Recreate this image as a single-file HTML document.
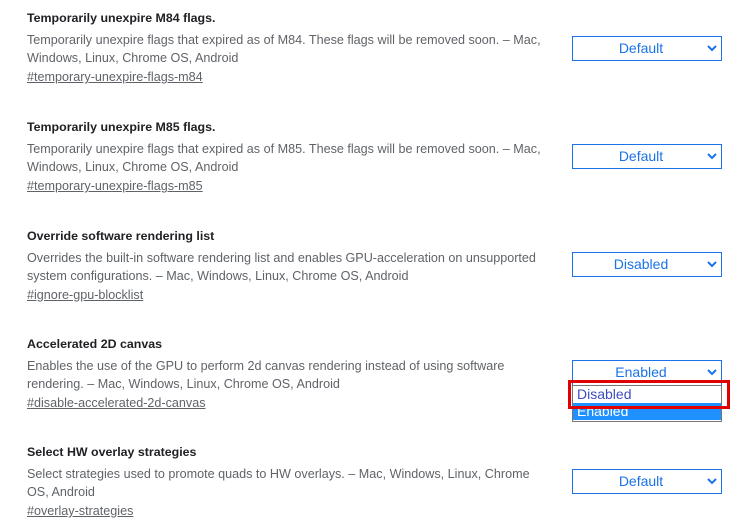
<html><head><style>
body{margin:0;width:755px;height:531px;background:#fff;font-family:"Liberation Sans",Arial,sans-serif;position:relative;overflow:hidden}
.s{position:absolute;left:27px;width:535px}
.t{font-size:12.4px;font-weight:bold;color:#202124;height:18px;line-height:18px;position:absolute;top:-9px;white-space:nowrap}
.d{font-size:12.6px;color:#5f6368;line-height:18px;position:absolute;top:13px;width:535px}
.l{font-size:12.6px;color:#5f6368;text-decoration:underline;position:absolute;line-height:18px;top:50px;white-space:nowrap}
.sel{position:absolute;left:572px;width:148px;height:23px;border:1px solid #1a73e8;color:#1a73e8;font-size:14px;line-height:23px;text-align:center;padding-right:0;box-sizing:content-box}
.sel span{position:relative;left:-6px}
.sel svg{position:absolute;right:4px;top:8px}
</style></head><body>
<div class="s" style="top:18px"><div class="t">Temporarily unexpire M84 flags.</div><div class="d">Temporarily unexpire flags that expired as of M84. These flags will be removed soon. – Mac, Windows, Linux, Chrome OS, Android</div><div class="l">#temporary-unexpire-flags-m84</div></div>
<div class="s" style="top:127px"><div class="t">Temporarily unexpire M85 flags.</div><div class="d">Temporarily unexpire flags that expired as of M85. These flags will be removed soon. – Mac, Windows, Linux, Chrome OS, Android</div><div class="l">#temporary-unexpire-flags-m85</div></div>
<div class="s" style="top:236px"><div class="t">Override software rendering list</div><div class="d">Overrides the built-in software rendering list and enables GPU-acceleration on unsupported system configurations. – Mac, Windows, Linux, Chrome OS, Android</div><div class="l">#ignore-gpu-blocklist</div></div>
<div class="s" style="top:344px"><div class="t">Accelerated 2D canvas</div><div class="d">Enables the use of the GPU to perform 2d canvas rendering instead of using software rendering. – Mac, Windows, Linux, Chrome OS, Android</div><div class="l">#disable-accelerated-2d-canvas</div></div>
<div class="s" style="top:452px"><div class="t">Select HW overlay strategies</div><div class="d" style="width:522px">Select strategies used to promote quads to HW overlays. – Mac, Windows, Linux, Chrome OS, Android</div><div class="l">#overlay-strategies</div></div>

<div class="sel" style="top:36px"><span>Default</span><svg width="10" height="7" viewBox="0 0 10 7"><path d="M1 1l4 4 4-4" stroke="#1a73e8" stroke-width="2" fill="none"/></svg></div>
<div class="sel" style="top:144px"><span>Default</span><svg width="10" height="7" viewBox="0 0 10 7"><path d="M1 1l4 4 4-4" stroke="#1a73e8" stroke-width="2" fill="none"/></svg></div>
<div class="sel" style="top:252px"><span>Disabled</span><svg width="10" height="7" viewBox="0 0 10 7"><path d="M1 1l4 4 4-4" stroke="#1a73e8" stroke-width="2" fill="none"/></svg></div>
<div class="sel" style="top:360px;height:24px;border-bottom:none"><span>Enabled</span><svg width="10" height="7" viewBox="0 0 10 7" style="top:8px"><path d="M1 1l4 4 4-4" stroke="#1a73e8" stroke-width="2" fill="none"/></svg></div>
<div class="sel" style="top:469px"><span>Default</span><svg width="10" height="7" viewBox="0 0 10 7"><path d="M1 1l4 4 4-4" stroke="#1a73e8" stroke-width="2" fill="none"/></svg></div>
<div style="position:absolute;left:572px;top:385px;width:148px;height:35px;border:1px solid #767676;background:#fff;font-size:14px">
<div style="height:17px;line-height:17px;padding-left:4px;color:#3c4ec0">Disabled</div>
<div style="height:17px;line-height:17px;padding-left:4px;color:#fff;background:#1e90ff">Enabled</div>
</div>
<div style="position:absolute;left:568px;top:380px;width:156px;height:23px;border:3px solid #e00000"></div>
</body></html>
